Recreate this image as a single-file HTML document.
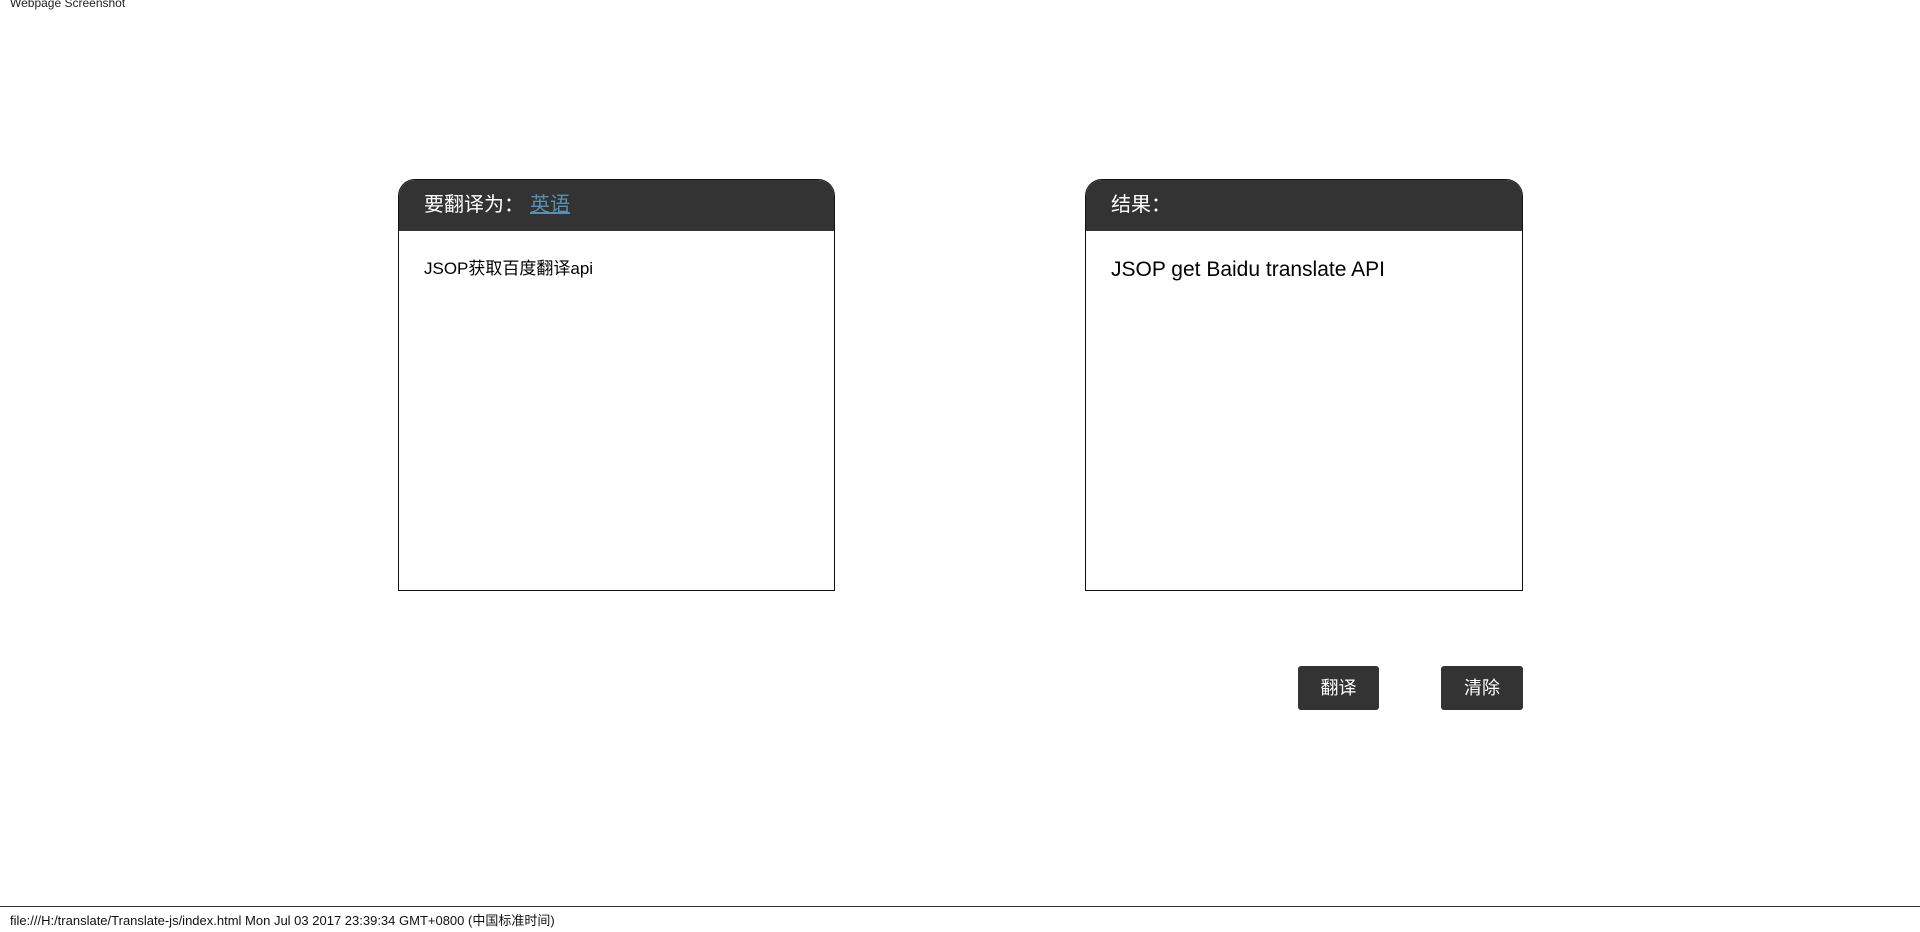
<!DOCTYPE html>
<html><head><meta charset="utf-8"><style>
body{margin:0;width:1920px;height:927px;background:#fff;position:relative;overflow:hidden;font-family:"Liberation Sans","Noto Sans CJK SC",sans-serif}
.top{position:absolute;left:10px;top:-4px;font-size:12px;color:#222}
.box{position:absolute;top:179px;width:437px;height:412px;border:1px solid #111;border-radius:17px 17px 0 0;box-sizing:border-box;overflow:hidden}
.hd{background:#333;height:51px;color:#fff;font-size:20px;line-height:51px;padding-left:25px}
.hd a{color:#5a8fb5;text-decoration:underline;margin-left:6px}
.b1{left:398px}.b2{left:1085px;width:438px}
.t1{position:absolute;left:25px;top:74px;font-size:17px;color:#000}
.t2{position:absolute;left:25px;top:78px;font-size:21px;color:#000}
.btn{position:absolute;top:666px;height:44px;background:#333;color:#fff;border-radius:3px;font-size:18px;line-height:44px;text-align:center}
.foot{position:absolute;left:0;top:906px;width:1920px;border-top:1px solid #333;font-size:13px;padding:3px 10px;color:#111}
</style></head><body>
<div class="top">Webpage Screenshot</div>
<div class="box b1"><div class="hd">要翻译为：<a>英语</a></div><div class="t1">JSOP获取百度翻译api</div></div>
<div class="box b2"><div class="hd">结果：</div><div class="t2">JSOP get Baidu translate API</div></div>
<div class="btn" style="left:1298px;width:81px">翻译</div>
<div class="btn" style="left:1441px;width:82px">清除</div>
<div class="foot">file:///H:/translate/Translate-js/index.html Mon Jul 03 2017 23:39:34 GMT+0800 (中国标准时间)</div>
</body></html>
